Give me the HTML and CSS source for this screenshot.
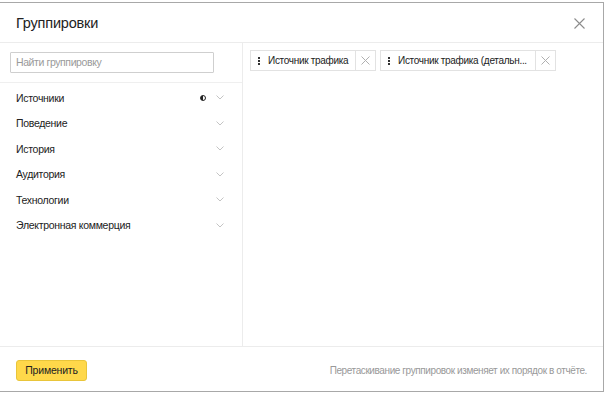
FILE: index.html
```html
<!DOCTYPE html>
<html lang="ru">
<head>
<meta charset="utf-8">
<link rel="stylesheet" href="styles.css">
</head>
<body>
<div class="dialog">
  <div class="header">
    <div class="title">Группировки</div>
    <svg class="close" width="11" height="11" viewBox="0 0 11 11"><path d="M0.5 0.5L10.5 10.5M10.5 0.5L0.5 10.5" stroke="#8c8c8c" stroke-width="1.1" fill="none"/></svg>
  </div>
  <div class="body">
    <div class="left">
      <div class="search-wrap">
        <div class="search">Найти группировку</div>
      </div>
      <ul class="list">
        <li class="item"><span class="name">Источники</span><span class="half"></span><svg class="chev" width="8" height="5" viewBox="0 0 8 5"><path d="M0.5 0.5L4 4L7.5 0.5" stroke="#c4c4c4" fill="none"/></svg></li>
        <li class="item"><span class="name">Поведение</span><svg class="chev" width="8" height="5" viewBox="0 0 8 5"><path d="M0.5 0.5L4 4L7.5 0.5" stroke="#c4c4c4" fill="none"/></svg></li>
        <li class="item"><span class="name">История</span><svg class="chev" width="8" height="5" viewBox="0 0 8 5"><path d="M0.5 0.5L4 4L7.5 0.5" stroke="#c4c4c4" fill="none"/></svg></li>
        <li class="item"><span class="name">Аудитория</span><svg class="chev" width="8" height="5" viewBox="0 0 8 5"><path d="M0.5 0.5L4 4L7.5 0.5" stroke="#c4c4c4" fill="none"/></svg></li>
        <li class="item"><span class="name">Технологии</span><svg class="chev" width="8" height="5" viewBox="0 0 8 5"><path d="M0.5 0.5L4 4L7.5 0.5" stroke="#c4c4c4" fill="none"/></svg></li>
        <li class="item"><span class="name">Электронная коммерция</span><svg class="chev" width="8" height="5" viewBox="0 0 8 5"><path d="M0.5 0.5L4 4L7.5 0.5" stroke="#c4c4c4" fill="none"/></svg></li>
      </ul>
    </div>
    <div class="right">
      <div class="chip">
        <span class="grip"><i></i><i></i><i></i></span>
        <span class="chip-text">Источник трафика</span>
        <span class="chip-x"><svg width="9" height="9" viewBox="0 0 9 9"><path d="M0.5 0.5L8.5 8.5M8.5 0.5L0.5 8.5" stroke="#b0b0b0" fill="none"/></svg></span>
      </div>
      <div class="chip">
        <span class="grip"><i></i><i></i><i></i></span>
        <span class="chip-text wide">Источник трафика (детальн...</span>
        <span class="chip-x"><svg width="9" height="9" viewBox="0 0 9 9"><path d="M0.5 0.5L8.5 8.5M8.5 0.5L0.5 8.5" stroke="#b0b0b0" fill="none"/></svg></span>
      </div>
    </div>
  </div>
  <div class="footer">
    <button class="apply">Применить</button>
    <div class="hint">Перетаскивание группировок изменяет их порядок в отчёте.</div>
  </div>
</div>
</body>
</html>
```
FILE: styles.css
```css
* { box-sizing: border-box; }
html, body { margin: 0; padding: 0; background: #fff; }
body {
  font-family: "Liberation Sans", Arial, sans-serif;
  color: #222;
  padding-top: 2px;
}
.dialog {
  width: 604px;
  height: 390px;
  border: 1px solid #a8a8a8;
  border-left: none;
  display: flex;
  flex-direction: column;
  background: #fff;
}
.header {
  height: 40px;
  border-bottom: 1px solid #ececec;
  display: flex;
  align-items: center;
  justify-content: space-between;
  padding: 0 18px 0 16px;
}
.title {
  font-size: 14.5px;
  letter-spacing: -0.2px;
  color: #222;
}
.close { margin-top: 2px; }
.body {
  flex: 1;
  display: flex;
}
.left {
  width: 243px;
  border-right: 1px solid #ececec;
}
.search-wrap {
  padding: 9px 28px 9px 10px;
  border-bottom: 1px solid #efefef;
}
.search {
  height: 21px;
  border: 1px solid #cfcfcf;
  border-radius: 1px;
  font-size: 10.5px;
  letter-spacing: -0.4px;
  color: #9a9a9a;
  padding: 0 5px;
  line-height: 19px;
  white-space: nowrap;
}
.list {
  list-style: none;
  margin: 0;
  padding: 2px 0 0 0;
}
.item {
  height: 25.5px;
  display: flex;
  align-items: center;
  padding: 0 18px 0 16px;
  font-size: 10.5px;
  letter-spacing: -0.3px;
  color: #222;
}
.name { flex: 1; white-space: nowrap; }
.half {
  width: 6px;
  height: 6px;
  border-radius: 50%;
  border: 1px solid #222;
  background: linear-gradient(90deg, #222 50%, #fff 50%);
  margin-right: 10px;
}
.chev { display: block; }
.right {
  flex: 1;
  display: flex;
  align-items: flex-start;
  gap: 4px;
  padding: 7px 0 0 7px;
}
.chip {
  height: 21px;
  border: 1px solid #e2e2e2;
  display: flex;
  align-items: stretch;
  font-size: 10px;
  letter-spacing: -0.3px;
  color: #222;
  white-space: nowrap;
}
.grip {
  width: 15px;
  display: flex;
  flex-direction: column;
  align-items: center;
  justify-content: center;
  gap: 1px;
}
.grip i {
  display: block;
  width: 2px;
  height: 2px;
  background: #333;
}
.chip-text {
  display: flex;
  align-items: center;
  padding: 0 0 0 2px;
  width: 89px;
  overflow: hidden;
}
.chip-text.wide { width: 139px; }
.chip-x {
  width: 20px;
  border-left: 1px solid #e2e2e2;
  display: flex;
  align-items: center;
  justify-content: center;
}
.footer {
  height: 45px;
  border-top: 1px solid #ececec;
  display: flex;
  align-items: center;
  justify-content: space-between;
  padding: 2px 16px 0 16px;
}
.apply {
  height: 21px;
  width: 71px;
  border: 1px solid #e9c53a;
  border-radius: 3px;
  background: #ffd84a;
  font-family: "Liberation Sans", Arial, sans-serif;
  font-size: 10.5px;
  letter-spacing: -0.2px;
  color: #222;
  padding: 0;
}
.hint {
  font-size: 10px;
  letter-spacing: -0.4px;
  color: #999;
  white-space: nowrap;
}
```
